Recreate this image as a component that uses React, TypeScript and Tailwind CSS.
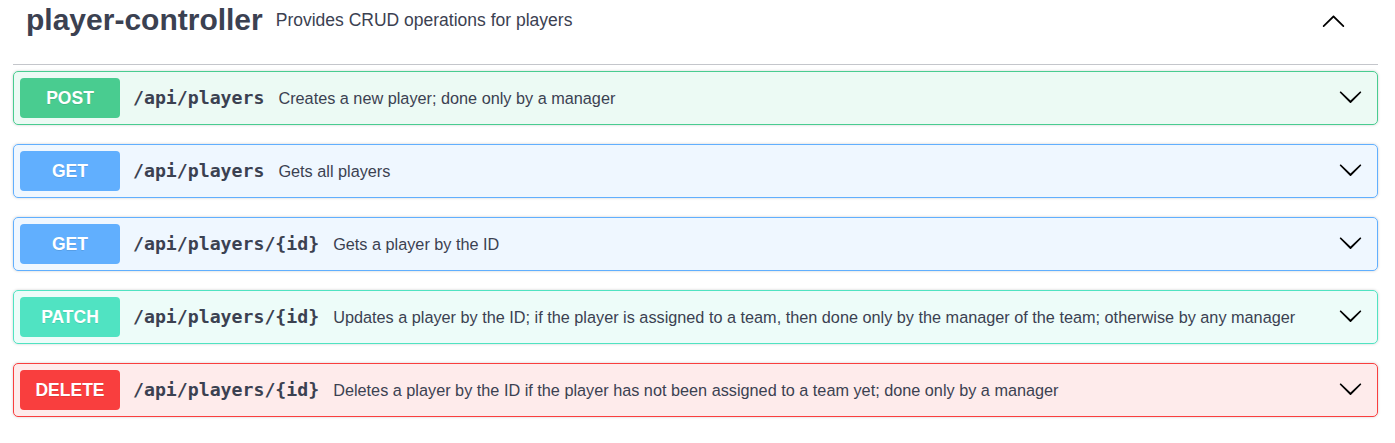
import React from 'react';

type Op = {
  method: string;
  path: string;
  summary: string;
  box: string;
  badge: string;
};

const ops: Op[] = [
  {
    method: 'POST',
    path: '/api/players',
    summary: 'Creates a new player; done only by a manager',
    box: 'border-[#49cc90] bg-[#49cc90]/10',
    badge: 'bg-[#49cc90]',
  },
  {
    method: 'GET',
    path: '/api/players',
    summary: 'Gets all players',
    box: 'border-[#61affe] bg-[#61affe]/10',
    badge: 'bg-[#61affe]',
  },
  {
    method: 'GET',
    path: '/api/players/{id}',
    summary: 'Gets a player by the ID',
    box: 'border-[#61affe] bg-[#61affe]/10',
    badge: 'bg-[#61affe]',
  },
  {
    method: 'PATCH',
    path: '/api/players/{id}',
    summary:
      'Updates a player by the ID; if the player is assigned to a team, then done only by the manager of the team; otherwise by any manager',
    box: 'border-[#50e3c2] bg-[#50e3c2]/10',
    badge: 'bg-[#50e3c2]',
  },
  {
    method: 'DELETE',
    path: '/api/players/{id}',
    summary: 'Deletes a player by the ID if the player has not been assigned to a team yet; done only by a manager',
    box: 'border-[#f93e3e] bg-[#f93e3e]/10',
    badge: 'bg-[#f93e3e]',
  },
];

function ChevronDown() {
  return (
    <svg width="25" height="25" viewBox="0 0 20 20" className="mb-[4px] mr-[8px] shrink-0" fill="#000">
      <path d="M17.418 6.109c.272-.268.709-.268.979 0s.271.701 0 .969l-7.908 7.83c-.27.268-.707.268-.979 0l-7.908-7.83c-.27-.268-.27-.701 0-.969.271-.268.709-.268.979 0L10 13.25l7.418-7.141z" />
    </svg>
  );
}

function ChevronUp() {
  return (
    <svg width="25" height="25" viewBox="0 0 20 20" className="shrink-0" fill="#000">
      <path d="M17.418 14.908c.272.268.709.268.979 0s.271-.701 0-.969l-7.908-7.83c-.27-.268-.707-.268-.979 0l-7.908 7.83c-.27.268-.27.701 0 .969.271.268.709.268.979 0L10 7.767l7.418 7.141z" />
    </svg>
  );
}

export default function App() {
  return (
    <div className="w-[1395px] h-[443px] bg-white px-[13px] pr-[17px] font-['Liberation_Sans',Arial,sans-serif] text-[#3b4151]">
      {/* Tag header */}
      <div className="flex items-center h-[40px] box-content pb-[24px] pl-[13px] pr-[32px] border-b border-[#c4c6cb]">
        <h3 className="text-[30px] font-bold leading-[34px]">player-controller</h3>
        <span className="ml-[13px] text-[17.5px]">Provides CRUD operations for players</span>
        <div className="ml-auto">
          <ChevronUp />
        </div>
      </div>

      {/* Operations */}
      <div className="mt-[6px] flex flex-col gap-[19px]">
        {ops.map((op, i) => (
          <div
            key={i}
            className={`flex items-center h-[54px] p-[6px] border rounded-[5px] shadow-[0_0_3px_rgba(0,0,0,0.19)] ${op.box}`}
          >
            <span
              className={`w-[100px] h-[40px] shrink-0 rounded-[4px] flex items-center justify-center text-white font-bold text-[17.5px] [text-shadow:0_1px_0_rgba(0,0,0,0.1)] ${op.badge}`}
            >
              {op.method}
            </span>
            <span className="pl-[13px] pr-[14px] font-['DejaVu_Sans_Mono',monospace] font-bold text-[18.2px] whitespace-nowrap">
              {op.path}
            </span>
            <span className="text-[16.25px] whitespace-nowrap">{op.summary}</span>
            <div className="ml-auto flex items-center">
              <ChevronDown />
            </div>
          </div>
        ))}
      </div>
    </div>
  );
}
